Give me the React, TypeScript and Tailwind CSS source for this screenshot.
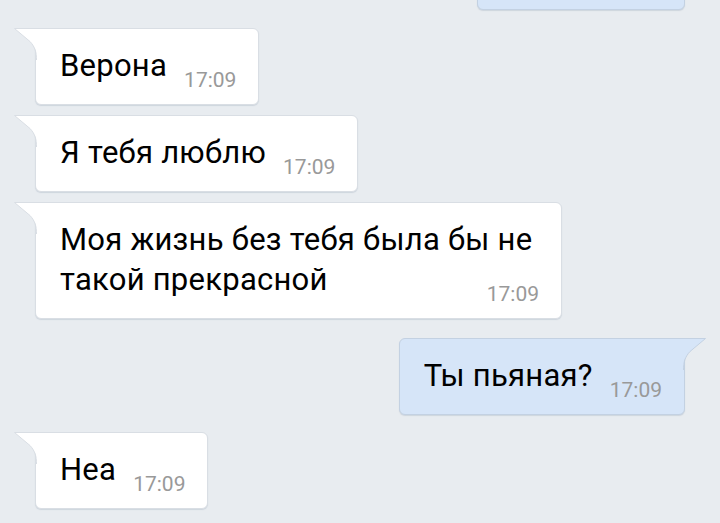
// Chat thread — incoming (white) and outgoing (blue) bubbles with tails and timestamps.

type Msg = {
  id: number;
  text: string;
  time: string;
  out?: boolean;
  gap: string;
};

const MESSAGES: Msg[] = [
  { id: 1, text: 'Верона', time: '17:09', gap: 'mt-[18px]' },
  { id: 2, text: 'Я тебя люблю', time: '17:09', gap: 'mt-[10px]' },
  { id: 3, text: 'Моя жизнь без тебя была бы не такой прекрасной', time: '17:09', gap: 'mt-[10px]' },
  { id: 4, text: 'Ты пьяная?', time: '17:09', out: true, gap: 'mt-[19px]' },
  { id: 5, text: 'Неа', time: '17:09', gap: 'mt-[17px]' },
];

function Tail({ out }: { out?: boolean }) {
  // Curved tail that hangs off the top corner of a bubble
  return (
    <svg
      width="23"
      height="32"
      viewBox="0 0 23 32"
      className={out ? 'absolute -top-px -right-[22px] -scale-x-100' : 'absolute -top-px -left-[22px]'}
    >
      <path
        d="M0.5 0.5 H23 V32 C23 24 21 19 16 13.5 L0.5 0.5 Z"
        fill={out ? '#d6e5f8' : '#ffffff'}
      />
      <path
        d="M23 0.5 H0.5 L16 13.5 C21 19 22.5 24 22.5 32"
        fill="none"
        stroke={out ? '#c3d1e2' : '#d9dee4'}
        strokeWidth="1"
      />
    </svg>
  );
}

function Bubble({ msg }: { msg: Msg }) {
  return (
    <div className={`${msg.gap} flex ${msg.out ? 'justify-end pr-[35px]' : 'justify-start pl-[35px]'}`}>
      <div
        className={`relative flow-root w-fit max-w-[527px] rounded-[6px] border pl-[24px] pr-[22px] pt-[17px] pb-[18px] shadow-[0_1px_1px_rgba(90,110,140,0.18)] ${
          msg.out
            ? 'rounded-tr-none bg-[#d6e5f8] border-[#c3d1e2]'
            : 'rounded-tl-none bg-white border-[#d9dee4]'
        }`}
      >
        <Tail out={msg.out} />
        <span className="text-[31px] leading-[40px] tracking-[0.25px] text-black">{msg.text}</span>
        <span className="float-right ml-[17px] mt-[24px] -mb-[5px] text-[21px] leading-[21px] text-[#999999]">
          {msg.time}
        </span>
      </div>
    </div>
  );
}

export default function App() {
  return (
    <div
      className="h-[523px] w-[720px] overflow-hidden bg-[#e8ecf0] pt-px"
      style={{ fontFamily: 'Roboto, "Noto Sans", sans-serif' }}
    >
      {/* bottom edge of the previous outgoing message */}
      <div className="-mt-[68px] flex justify-end pr-[35px]">
        <div className="h-[77px] w-[208px] rounded-[6px] border border-[#c3d1e2] bg-[#d6e5f8] shadow-[0_1px_1px_rgba(90,110,140,0.18)]" />
      </div>
      {MESSAGES.map(m => (
        <Bubble key={m.id} msg={m} />
      ))}
    </div>
  );
}
